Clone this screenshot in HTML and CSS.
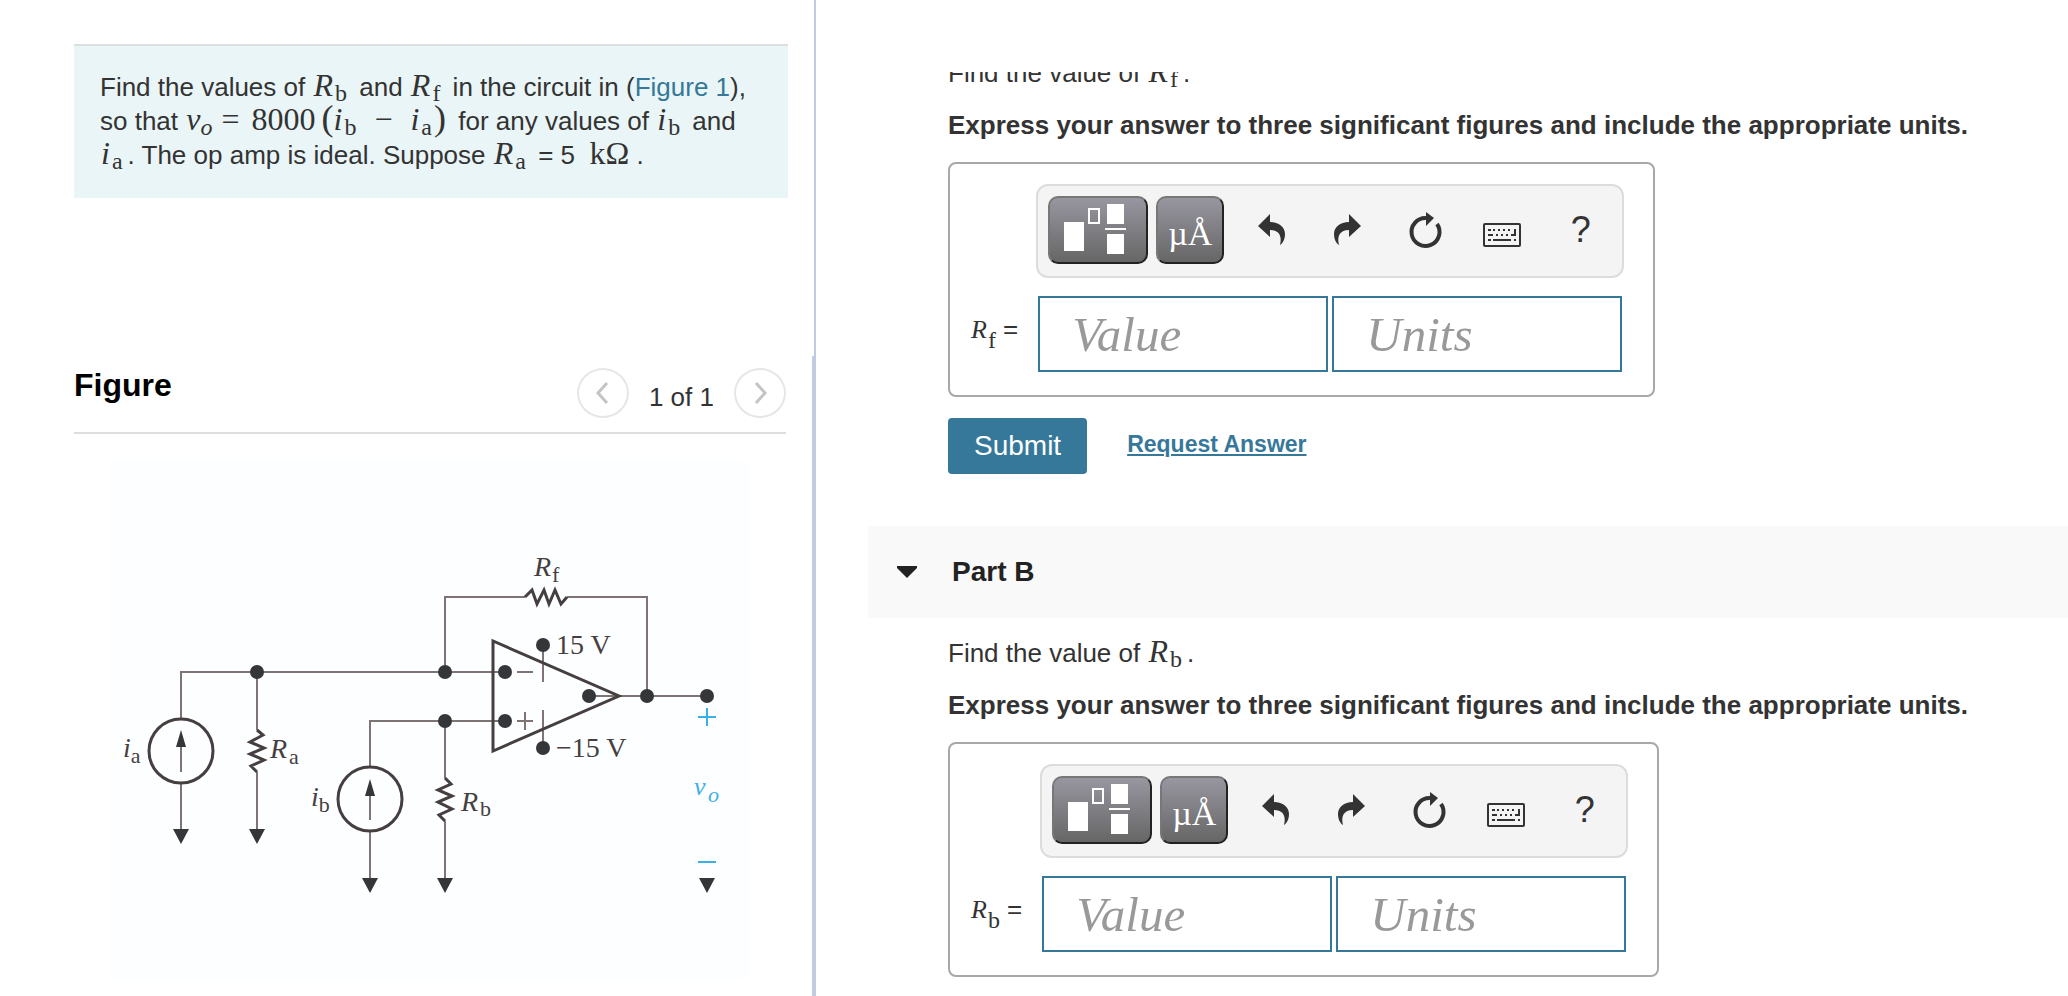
FILE: index.html
```html
<!DOCTYPE html>
<html lang="en">
<head>
    <meta charset="UTF-8">
    <meta name="viewport" content="width=device-width, initial-scale=1.0">
    <title>Op Amp Circuit</title>
    <link rel="stylesheet" href="styles.css">
</head>
<body>

<!-- icons shared by both answer toolbars -->
<svg class="sprite" aria-hidden="true">
    <symbol id="icon-template" viewBox="0 0 96 64">
        <path fill="#fff" d="M14 24h20v29H14zM57 6h17v20H57zM55 30h21v2H55zM57 36h17v20H57z"/>
        <rect x="39" y="11" width="10" height="14" fill="none" stroke="#fff" stroke-width="2"/>
    </symbol>
    <symbol id="icon-undo" viewBox="0 0 40 40">
        <path d="M7 16L19 4v8c9 0 15 5 15 12 0 5-2 9-5 11 2-8 0-15-10-15v7z"/>
    </symbol>
    <symbol id="icon-redo" viewBox="0 0 40 40">
        <path d="M33 16L21 4v8C12 12 6 17 6 24c0 5 2 9 5 11-2-8 0-15 10-15v7z"/>
    </symbol>
    <symbol id="icon-reset" viewBox="0 0 40 40">
        <path d="M31 14a14 14 0 1 1-11-6" fill="none" stroke="#333" stroke-width="4"/>
        <path d="M20 2l8 6-8 8z"/>
    </symbol>
    <symbol id="icon-keyboard" viewBox="0 0 40 40">
        <rect x="1" y="14" width="36" height="22" rx="1" fill="none" stroke="#333" stroke-width="2"/>
        <path d="M5 19h3v2H5zM10 19h2v2h-2zM15 19h2v2h-2zM20 19h2v2h-2zM25 19h2v2h-2zM31 19h2v7h-5v-2h3zM5 24h5v2H5zM13 24h2v2h-2zM18 24h2v2h-2zM23 24h2v2h-2zM5 29h3v2H5zM10 29h18v2H10zM31 29h2v2h-2z"/>
    </symbol>
</svg>

<div class="layout">
    <aside class="left">
        <section class="problem">
            <div class="problem-text">
                Find the values of <span class="math"><var>R</var><sub>b</sub></span> and
                <span class="math"><var>R</var><sub>f</sub></span> in the circuit in (<a href="#figure">Figure 1</a>),<br>
                so that <span class="math"><var class="v">v</var><sub><i>o</i></sub><span class="op">=</span>8000<span class="paren">(</span><var>i</var><sub>b</sub><span class="op wide">−</span><var>i</var><sub>a</sub><span class="paren close">)</span></span>
                for any values of <span class="math"><var>i</var><sub>b</sub></span>&nbsp;and<br>
                <span class="math"><var>i</var><sub>a</sub></span>. The op amp is ideal. Suppose
                <span class="math"><var>R</var><sub>a</sub></span> = 5 &nbsp;<span class="math unit">kΩ</span> .
            </div>
        </section>

        <section class="figure" id="figure">
            <header class="figure-header">
                <h2>Figure</h2>
                <div class="pager">
                    <button type="button" aria-label="Previous figure">
                        <svg viewBox="0 0 24 24"><path d="M16 2L7 12l9 10"/></svg>
                    </button>
                    <span>1 of 1</span>
                    <button type="button" aria-label="Next figure">
                        <svg viewBox="0 0 24 24"><path d="M8 2l9 10-9 10"/></svg>
                    </button>
                </div>
            </header>

            <svg class="circuit" viewBox="110 460 640 520" role="img" aria-label="Op amp circuit">
                <!-- wires -->
                <g class="wire">
                    <path d="M181 718V672H505M181 783V832M257 672V730M257 772V832"/>
                    <path d="M370 766V721H505M370 832V880M445 721V778M445 821V880"/>
                    <path d="M445 672V597H525M567 597H647V696M589 696H707"/>
                    <path d="M543 645V682M543 710V748M517 672H533M517 721H533M525 712V730"/>
                    <path d="M181 745V772M370 794V820"/>
                </g>
                <!-- resistors, sources, op amp -->
                <g class="part">
                    <path d="M257 730l6 5-13 7 14 6-14 6 14 6-13 6 6 6"/>
                    <path d="M445 778l6 6-13 6 14 6-14 6 14 7-13 6 6 6"/>
                    <path d="M525 597l7-7 5 14 7-14 5 14 6-14 6 14 6-7"/>
                    <circle cx="181" cy="751" r="32"/>
                    <circle cx="370" cy="799" r="32"/>
                    <path d="M493 641V751L619 696z"/>
                </g>
                <!-- nodes and arrow heads -->
                <g class="node">
                    <circle cx="257" cy="672" r="7"/><circle cx="445" cy="672" r="7"/>
                    <circle cx="445" cy="721" r="7"/><circle cx="505" cy="672" r="7"/>
                    <circle cx="505" cy="721" r="7"/><circle cx="543" cy="645" r="7"/>
                    <circle cx="543" cy="748" r="7"/><circle cx="589" cy="696" r="7"/>
                    <circle cx="647" cy="696" r="7"/><circle cx="707" cy="696" r="7"/>
                    <path d="M173 829h16l-8 15zM249 829h16l-8 15zM362 878h16l-8 15zM437 878h16l-8 15zM699 878h16l-8 15z"/>
                    <path d="M181 730l5 17h-10zM370 779l5 17h-10z"/>
                </g>
                <g class="label">
                    <text x="123" y="757"><tspan class="it">i</tspan><tspan class="sub" dy="6">a</tspan></text>
                    <text x="270" y="758"><tspan class="it">R</tspan><tspan class="sub" x="289" dy="6">a</tspan></text>
                    <text x="311" y="806"><tspan class="it">i</tspan><tspan class="sub" dy="6">b</tspan></text>
                    <text x="461" y="811"><tspan class="it">R</tspan><tspan class="sub" x="480" dy="5">b</tspan></text>
                    <text x="534" y="576"><tspan class="it">R</tspan><tspan class="sub" x="552" dy="6">f</tspan></text>
                    <text x="556" y="654">15 V</text>
                    <text x="556" y="757">−15 V</text>
                </g>
                <g class="out">
                    <path d="M698 717h18M707 708v18M698 862h18"/>
                    <text x="694" y="795">v<tspan class="sub" x="708" dy="7">o</tspan></text>
                </g>
            </svg>
        </section>
    </aside>

    <main class="right">
        <section class="part-body part-a">
            <p>Find the value of <span class="math"><var>R</var><sub>f</sub></span>.</p>
            <p><strong>Express your answer to three significant figures and include the appropriate units.</strong></p>
            <div class="answer">
                <div class="toolbar">
                    <button type="button" class="key key-wide" aria-label="Templates"><svg><use href="#icon-template"/></svg></button>
                    <button type="button" class="key">µÅ</button>
                    <div class="tools">
                        <button type="button" aria-label="Undo"><svg><use href="#icon-undo"/></svg></button>
                        <button type="button" aria-label="Redo"><svg><use href="#icon-redo"/></svg></button>
                        <button type="button" aria-label="Reset"><svg><use href="#icon-reset"/></svg></button>
                        <button type="button" aria-label="Keyboard"><svg><use href="#icon-keyboard"/></svg></button>
                        <button type="button">?</button>
                    </div>
                </div>
                <label for="rf-value"><var>R</var><sub>f</sub> =</label>
                <div class="fields">
                    <input type="text" id="rf-value" placeholder="Value">
                    <input type="text" id="rf-units" placeholder="Units" aria-label="Units">
                </div>
            </div>
            <div class="actions">
                <button type="submit" class="submit">Submit</button>
                <a href="#request">Request Answer</a>
            </div>
        </section>

        <h2 class="part-header">
            <svg viewBox="0 0 22 12"><path d="M1 0h20v2L11 12 1 2z"/></svg>
            Part B
        </h2>

        <section class="part-body">
            <p>Find the value of <span class="math"><var>R</var><sub>b</sub></span>.</p>
            <p><strong>Express your answer to three significant figures and include the appropriate units.</strong></p>
            <div class="answer">
                <div class="toolbar">
                    <button type="button" class="key key-wide" aria-label="Templates"><svg><use href="#icon-template"/></svg></button>
                    <button type="button" class="key">µÅ</button>
                    <div class="tools">
                        <button type="button" aria-label="Undo"><svg><use href="#icon-undo"/></svg></button>
                        <button type="button" aria-label="Redo"><svg><use href="#icon-redo"/></svg></button>
                        <button type="button" aria-label="Reset"><svg><use href="#icon-reset"/></svg></button>
                        <button type="button" aria-label="Keyboard"><svg><use href="#icon-keyboard"/></svg></button>
                        <button type="button">?</button>
                    </div>
                </div>
                <label for="rb-value"><var>R</var><sub>b</sub> =</label>
                <div class="fields">
                    <input type="text" id="rb-value" placeholder="Value">
                    <input type="text" id="rb-units" placeholder="Units" aria-label="Units">
                </div>
            </div>
        </section>
    </main>
</div>
</body>
</html>
```
FILE: styles.css
```css
* { box-sizing: border-box; }
body {
    margin: 0; background: #fff; color: #333;
    font-family: "Liberation Sans", Arial, Helvetica, sans-serif;
    font-size: 26px; line-height: 34px;
}
.sprite { display: none; }
a { color: #367899; }

.layout {
    display: grid; grid-template-columns: minmax(0, 816px) minmax(0, 1fr);
    height: 100vh; overflow: hidden;
}

/* left side */
.left { display: flex; flex-direction: column; min-height: 0; }
.problem {
    flex: 0 0 356px; padding: 44px 26px 0 74px;
    border-right: 2px solid #bfcbdf;
}
.problem-text {
    padding: 24px 26px 26px; background: #eaf5f7;
    border-top: 2px solid #dedede; white-space: nowrap;
}
.problem-text a { text-decoration: none; }

.math, label var, label sub {
    font-family: "Liberation Serif", "Times New Roman", serif;
}
.math { margin: 0 5px 0 1px; font-size: 32px; line-height: 0; }
.math var { margin-right: 2px; }
.math .v { margin-right: 0; }
.math.unit { margin: 0; }
sub { font-size: 24px; line-height: 0; vertical-align: -5px; }
.op { margin: 0 12px 0 9px; }
.op.wide { margin: 0 18px; }
.paren { font-size: 36px; margin-left: 6px; }
.paren.close { margin-left: 2px; }

.figure {
    flex: 1; min-height: 0; overflow: hidden;
    padding: 12px 26px 0 74px; border-right: 4px solid #bfcbdf;
}
.figure-header {
    display: flex; justify-content: space-between; align-items: flex-start;
    height: 66px; border-bottom: 2px solid #dedede;
}
.figure-header h2 {
    margin: 0; font-size: 32px; line-height: 34px; color: #000;
}
.pager { display: flex; align-items: center; gap: 20px; }
.pager span { padding-top: 8px; }
.pager button {
    display: flex; align-items: center; justify-content: center;
    width: 52px; height: 50px; padding: 0;
    background: #fff; border: 2px solid #e6e6e6; border-radius: 50%;
}
.pager svg { width: 24px; height: 24px; fill: none; stroke: #c4c4c4; stroke-width: 3; }

.circuit {
    display: block; width: 640px; max-width: 100%;
    margin: 26px 0 0 36px; background: #fdfeff;
    font-family: "Liberation Serif", "Times New Roman", serif;
}
.wire { fill: none; stroke: #7d7473; stroke-width: 2; }
.part { fill: none; stroke: #453f40; stroke-width: 3; }
.node { fill: #35363a; }
.label { fill: #453f40; font-size: 28px; }
.it { font-style: italic; }
.sub { font-size: 22px; }
.out text { fill: #3bb0e6; font-size: 26px; font-style: italic; }
.out path { stroke: #3bb0e6; stroke-width: 2; }

/* right side */
.right { margin-top: 72px; min-height: 0; overflow: hidden; }
.part-body { padding: 18px 24px 19px 132px; }
.part-body p { margin: 0 0 18px; }
/* scrolled so that the first line is partly out of view */
.part-a { margin-top: -34px; padding-bottom: 52px; }

.answer {
    display: grid; grid-template-columns: auto 588px;
    column-gap: 18px; row-gap: 18px; align-items: center;
    width: fit-content; margin-top: 20px; padding: 20px 29px 23px 21px;
    border: 2px solid #a8a8a8; border-radius: 8px;
}
.toolbar {
    grid-column: 2; display: flex; align-items: flex-start; gap: 8px;
    height: 94px; padding: 10px 3px 10px 10px;
    background: #f4f4f4; border: 2px solid #dcdcdc; border-radius: 12px;
}
.key {
    flex: none; width: 68px; height: 68px; padding: 8px 0 0; color: #fff;
    font-family: "Liberation Serif", "Times New Roman", serif; font-size: 34px;
    background: linear-gradient(#9896a0, #666);
    border: 2px solid; border-color: #777 #222 #222 #777; border-radius: 10px;
}
.key-wide { width: 100px; padding: 0; }
.key-wide svg { display: block; width: 96px; height: 64px; }
.tools { display: flex; flex: 1; }
.tools button {
    display: flex; flex: 1; align-items: center; justify-content: center;
    height: 68px; padding: 0; background: none; border: 0;
    color: #333; font-family: inherit; font-size: 36px;
}
.tools svg { width: 40px; height: 40px; flex: none; fill: #333; }

label { padding-bottom: 10px; }
label var { margin-right: 1px; }
label sub { vertical-align: -10px; }
.fields { display: flex; gap: 4px; padding: 0 2px; }
.fields input {
    flex: 1; min-width: 0; height: 76px; padding: 0 32px;
    border: 2px solid #367899; color: #333;
    font-family: "Liberation Serif", "Times New Roman", serif;
    font-size: 49px; font-style: italic;
}
.fields input::placeholder { color: #999; opacity: 1; }

.actions { display: flex; align-items: center; gap: 40px; margin-top: 21px; }
.submit {
    height: 56px; padding: 0 26px; color: #fff; background: #367899;
    border: 0; border-radius: 4px; font-family: inherit; font-size: 28px;
}
.actions a { padding-bottom: 4px; font-size: 23px; font-weight: bold; }

.part-header {
    display: flex; align-items: center; gap: 34px;
    height: 92px; margin: 0 0 0 52px; padding-left: 28px;
    background: #f9f9f9; color: #222; font-size: 28px;
}
.part-header svg { width: 22px; height: 12px; fill: #222; }
```
